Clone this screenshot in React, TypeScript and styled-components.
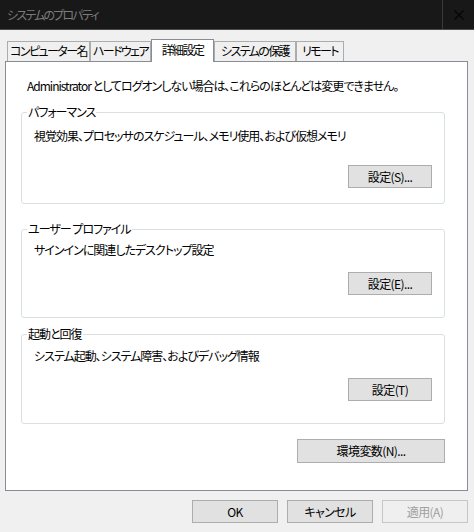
import React from "react";
import styled, { createGlobalStyle } from "styled-components";

const GlobalStyle = createGlobalStyle`
  html, body {
    margin: 0;
    padding: 0;
    background: #f0f0f0;
  }
  body {
    font-family: "Noto Sans CJK JP", "Noto Sans", sans-serif;
    font-size: 12px;
    line-height: 16px;
    color: #000;
    letter-spacing: -1px;
    font-feature-settings: "palt" 1;
  }
  * {
    box-sizing: border-box;
  }
`;

const Window = styled.div`
  width: 474px;
  height: 532px;
  display: flex;
  flex-direction: column;
  background: #f0f0f0;
  overflow: hidden;
`;

const TitleBar = styled.div`
  height: 30px;
  display: flex;
  align-items: center;
  background: #181818;
  border-bottom: 1px solid #4a4a4a;
`;

const TitleText = styled.div`
  flex: 1;
  padding-left: 7px;
  color: #7c7c7c;
  letter-spacing: -1.8px;
`;

const CloseButton = styled.div`
  width: 32px;
  height: 100%;
  display: flex;
  align-items: center;
  justify-content: center;
  border-left: 1px solid #3a3a3a;
`;

const TabRow = styled.div`
  display: flex;
  align-items: flex-end;
  margin-top: 9px;
  padding-left: 7px;
`;

const Tab = styled.div<{ active?: boolean; width: number }>`
  position: relative;
  z-index: ${(p) => (p.active ? 1 : 0)};
  width: ${(p) => p.width}px;
  height: ${(p) => (p.active ? "23px" : "20px")};
  margin-bottom: ${(p) => (p.active ? "-1px" : "0")};
  padding-top: ${(p) => (p.active ? "2px" : "1px")};
  border: 1px solid ${(p) => (p.active ? "#898c95" : "#acacac")};
  border-bottom: none;
  background: ${(p) => (p.active ? "#ffffff" : "#f0f0f0")};
  display: flex;
  justify-content: center;
  white-space: nowrap;
  letter-spacing: -1.6px;
`;

const Panel = styled.div`
  margin: 0 6px 0 5px;
  border: 1px solid #898c95;
  background: #ffffff;
  display: flex;
  flex-direction: column;
  padding: 16px 22px 27px 15px;
`;

const Intro = styled.div`
  padding-left: 6px;
  margin-bottom: 10px;
  white-space: nowrap;
`;

const Group = styled.fieldset<{ gap: number; padTop: number; btnGap: number; padBottom: number }>`
  margin: ${(p) => p.gap}px 0 0;
  padding: ${(p) => p.padTop}px 12px ${(p) => p.padBottom}px 5px;
  border: 1px solid #dadfe4;
  border-radius: 3px;
  display: flex;
  flex-direction: column;
  min-width: 0;

  & > button {
    margin-top: ${(p) => p.btnGap}px;
  }
`;

const Legend = styled.legend`
  padding: 0 1px;
  line-height: 16px;
`;

const Description = styled.div`
  padding-left: 7px;
  white-space: nowrap;
`;

const Button = styled.button<{ width: number }>`
  align-self: flex-end;
  width: ${(p) => p.width}px;
  height: 23px;
  padding: 0;
  background: #e1e1e1;
  border: 1px solid #adadad;
  font: inherit;
  letter-spacing: -0.6px;
  font-feature-settings: "palt" 1;
  color: #000;

  &:disabled {
    background: #efefef;
    border-color: #c6c6c6;
    color: #a0a0a0;
  }
`;

const EnvButton = styled(Button)`
  margin-top: 15px;
  height: 24px;
`;

const Footer = styled.div`
  display: flex;
  justify-content: flex-end;
  gap: 9px;
  margin-top: 9px;
  padding-right: 6px;
`;

const tabs = [
  { label: "コンピューター名", width: 83 },
  { label: "ハードウェア", width: 61 },
  { label: "詳細設定", width: 63 },
  { label: "システムの保護", width: 82 },
  { label: "リモート", width: 48 },
];

const groups = [
  {
    title: "パフォーマンス",
    text: "視覚効果、プロセッサのスケジュール、メモリ使用、および仮想メモリ",
    button: "設定(S)...",
    gap: 0,
    padTop: 8,
    btnGap: 21,
    padBottom: 15,
  },
  {
    title: "ユーザー プロファイル",
    text: "サインインに関連したデスクトップ設定",
    button: "設定(E)...",
    gap: 17,
    padTop: 5,
    btnGap: 14,
    padBottom: 22,
  },
  {
    title: "起動と回復",
    text: "システム起動、システム障害、およびデバッグ情報",
    button: "設定(T)",
    gap: 8,
    padTop: 6,
    btnGap: 14,
    padBottom: 22,
  },
];

function App(): JSX.Element {
  return (
    <Window>
      <GlobalStyle />
      <TitleBar>
        <TitleText>システムのプロパティ</TitleText>
        <CloseButton>
          <svg width="10" height="10" viewBox="0 0 10 10">
            <path d="M0.5 0.5 L9.5 9.5 M9.5 0.5 L0.5 9.5" stroke="#050505" strokeWidth="1.4" />
          </svg>
        </CloseButton>
      </TitleBar>

      <TabRow>
        {tabs.map((t) => (
          <Tab key={t.label} width={t.width} active={t.label === "詳細設定"}>
            {t.label}
          </Tab>
        ))}
      </TabRow>

      <Panel>
        <Intro>Administrator としてログオンしない場合は、これらのほとんどは変更できません。</Intro>

        {groups.map((g) => (
          <Group key={g.title} gap={g.gap} padTop={g.padTop} btnGap={g.btnGap} padBottom={g.padBottom}>
            <Legend>{g.title}</Legend>
            <Description>{g.text}</Description>
            <Button width={84}>{g.button}</Button>
          </Group>
        ))}

        <EnvButton width={148}>環境変数(N)...</EnvButton>
      </Panel>

      <Footer>
        <Button width={86}>OK</Button>
        <Button width={86}>キャンセル</Button>
        <Button width={86} disabled>
          適用(A)
        </Button>
      </Footer>
    </Window>
  );
}

export default App;
